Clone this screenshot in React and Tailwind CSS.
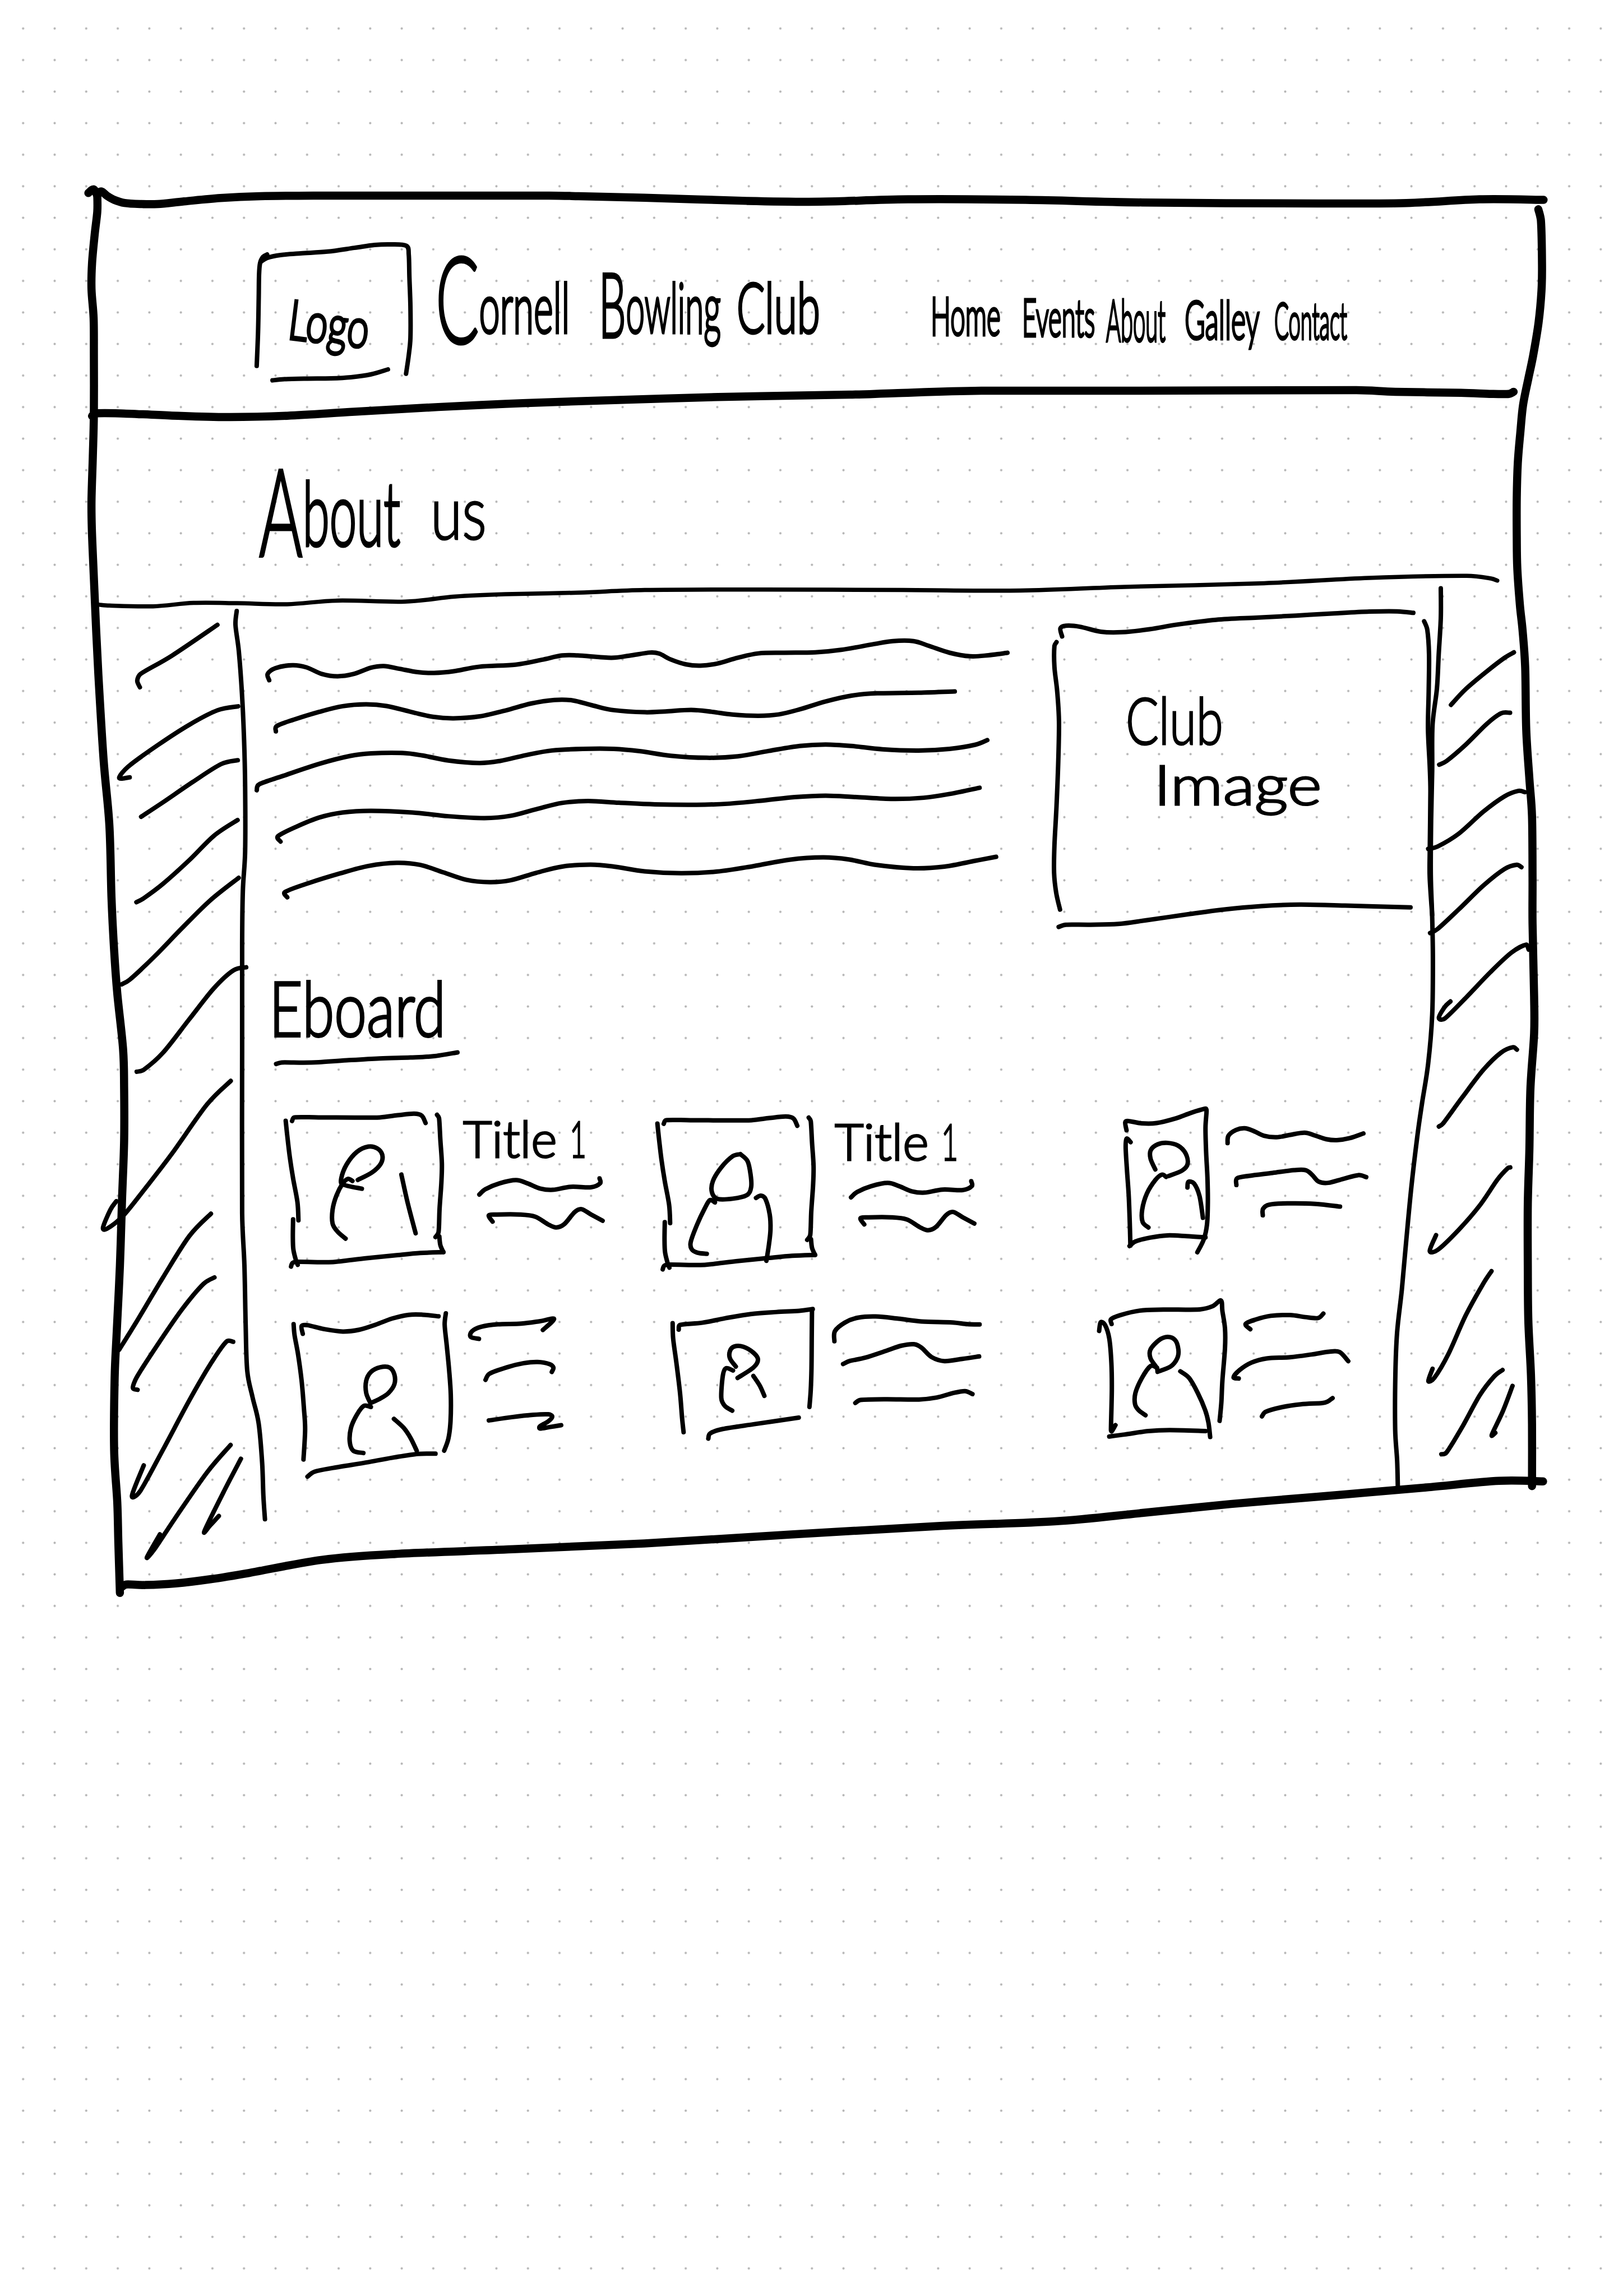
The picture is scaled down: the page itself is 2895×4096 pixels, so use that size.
import { useLayoutEffect, useRef } from "react";

// Turns a list of pen positions into one smooth stroke.
function smooth(p) {
  let d = `M${p[0][0]} ${p[0][1]}`;
  for (let i = 0; i < p.length - 1; i++) {
    const a = p[i - 1] || p[i];
    const b = p[i];
    const c = p[i + 1];
    const e = p[i + 2] || c;
    const seg = Math.hypot(c[0] - b[0], c[1] - b[1]);
    const k1 = Math.min(1 / 6, (seg * 0.4) / (Math.hypot(c[0] - a[0], c[1] - a[1]) || 1));
    const k2 = Math.min(1 / 6, (seg * 0.4) / (Math.hypot(e[0] - b[0], e[1] - b[1]) || 1));
    d += `C${b[0] + (c[0] - a[0]) * k1} ${b[1] + (c[1] - a[1]) * k1} ${c[0] - (e[0] - b[0]) * k2} ${c[1] - (e[1] - b[1]) * k2} ${c[0]} ${c[1]}`;
  }
  return d;
}

function Ink({ box, strokes, pen = 8 }) {
  return (
    <svg
      viewBox={box}
      preserveAspectRatio="none"
      className="pointer-events-none absolute inset-0 h-full w-full overflow-visible"
      fill="none"
      stroke="#000"
      strokeWidth={pen}
      strokeLinecap="round"
      strokeLinejoin="round"
      aria-hidden="true"
    >
      {strokes.map((s, i) => (
        <path key={i} d={smooth(s)} vectorEffect="non-scaling-stroke" />
      ))}
    </svg>
  );
}

// A hand-lettered word, squeezed so that it fills its own slot.
function Word({ className, children }) {
  const slot = useRef(null);
  const text = useRef(null);
  useLayoutEffect(() => {
    const ratio = slot.current.clientWidth / text.current.offsetWidth;
    text.current.style.transform = `scaleX(${ratio})`;
  }, []);
  return (
    <span ref={slot} className={`block shrink-0 ${className}`}>
      <span ref={text} className="inline-block origin-left whitespace-nowrap">
        {children}
      </span>
    </span>
  );
}

const frameThick = [
  [[168, 367], [178, 360], [185, 372]],
  [[185, 368], [193, 364], [203, 372], [217, 380], [237, 386], [267, 388], [300, 388], [350, 383], [419, 376.5], [495, 373], [610, 372], [738, 372], [929, 372], [1044, 372], [1100, 373], [1225, 376], [1420, 382], [1560, 383.5], [1727, 379], [1950, 380], [2172, 385], [2507, 387], [2674, 386], [2813, 379], [2935, 380]],
  [[185, 372], [185, 402], [180, 446], [175, 501], [174, 550], [178, 605], [178.5, 671], [178.5, 786], [176.5, 868], [174, 951], [174.6, 1005], [178, 1088], [182, 1180], [187, 1282], [197, 1445], [208, 1570], [212, 1707], [217, 1807], [223, 1889], [234, 1995], [236, 2070], [236, 2170], [232, 2282], [228, 2407], [222, 2532], [218, 2620], [217, 2757], [223, 2857], [225, 2932], [228, 3029]],
  [[175, 791], [182, 786], [228, 786], [323, 790], [432, 793], [546, 790.6], [674, 783], [833, 774], [961, 768], [1100, 763], [1365, 755], [1615, 750.5], [1700, 747.7], [1866, 743], [2115, 743], [2579, 742], [2653, 745], [2778, 747], [2836, 749], [2869, 749], [2878, 745]],
  [[2925, 398], [2930, 420], [2932, 503], [2931, 553], [2925.5, 613], [2915, 677], [2906, 720], [2896, 770], [2891, 820], [2886, 880], [2884, 947], [2884, 1020], [2885, 1080], [2890, 1151], [2895, 1198], [2900, 1269], [2902, 1387], [2908, 1481], [2913, 1552], [2914, 1670], [2914, 1756], [2917, 1896], [2917, 1965], [2910, 2070], [2908, 2186], [2905, 2290], [2905, 2406], [2906, 2511], [2911, 2615], [2913, 2708], [2913, 2826]],
  [[231, 3018], [240, 3013], [277, 3014], [334, 3011], [400, 3003], [474, 2991], [613, 2966], [752, 2955], [975, 2946], [1225, 2935], [1504, 2918], [1783, 2902], [2005, 2893], [2172, 2877], [2340, 2860], [2507, 2846], [2600, 2838], [2717, 2828], [2850, 2816], [2934, 2817]],
];

const frameThin = [
  [[189, 1150], [208, 1151.5], [291, 1153], [368, 1146.5], [451, 1147], [546, 1149], [642, 1142], [770, 1144], [865, 1134.5], [961, 1130], [1100, 1127], [1226, 1122], [1450, 1121], [1717, 1122], [1940, 1123], [2139, 1116], [2404, 1109], [2603, 1099], [2789, 1095], [2835, 1100], [2847, 1104]],
];

const logoBox = [
  [[640, 300], [628, 308], [619, 330], [616, 370], [615, 450], [613, 570], [609, 687]],
  [[622, 325], [640, 312], [680, 302], [740, 296], [820, 290], [900, 277], [960, 267], [1010, 265], [1055, 270], [1062, 300], [1064, 380], [1067, 480], [1067, 590], [1062, 650], [1054, 714]],
  [[656, 737], [690, 733], [760, 731], [830, 730], [890, 726], [950, 716], [1000, 699]],
];

const paragraph = [
  [[73, 440], [70, 410], [85, 382], [118, 368], [145, 378], [175, 410], [205, 421], [235, 411], [270, 380], [295, 372], [325, 385], [360, 401], [392, 405], [430, 397], [480, 375], [550, 365], [600, 342], [640, 321], [670, 321], [735, 332], [770, 322], [810, 307], [828, 312], [850, 340], [880, 364], [908, 370], [940, 360], [980, 332], [1020, 311], [1070, 308], [1130, 306], [1180, 294], [1240, 268], [1280, 252], [1320, 252], [1350, 275], [1390, 308], [1430, 325], [1465, 320], [1502, 308]],
  [[86, 686], [88, 660], [120, 630], [170, 592], [215, 565], [260, 556], [300, 564], [350, 594], [390, 616], [430, 623], [480, 614], [530, 586], [580, 552], [625, 535], [660, 537], [700, 562], [740, 584], [800, 594], [840, 590], [890, 583], [930, 592], [970, 605], [1020, 611], [1060, 604], [1100, 580], [1150, 542], [1200, 514], [1250, 503], [1330, 500], [1400, 494]],
  [[49, 969], [54, 940], [100, 900], [170, 842], [230, 804], [270, 792], [330, 790], [370, 802], [420, 826], [480, 838], [520, 828], [570, 800], [620, 778], [680, 770], [740, 770], [790, 781], [850, 803], [920, 813], [980, 806], [1040, 780], [1100, 756], [1150, 749], [1200, 756], [1260, 772], [1330, 778], [1390, 770], [1440, 750], [1463, 728]],
  [[95, 1216], [90, 1190], [125, 1145], [170, 1100], [215, 1076], [270, 1068], [350, 1076], [420, 1094], [490, 1103], [540, 1092], [590, 1060], [640, 1030], [690, 1021], [750, 1029], [820, 1037], [900, 1039], [960, 1034], [1030, 1018], [1090, 1002], [1150, 995], [1210, 1002], [1280, 1011], [1340, 1005], [1390, 987], [1448, 957]],
  [[108, 1484], [104, 1458], [150, 1415], [210, 1369], [265, 1333], [320, 1318], [365, 1328], [410, 1364], [455, 1400], [500, 1411], [540, 1402], [590, 1366], [640, 1336], [695, 1327], [740, 1336], [800, 1359], [870, 1368], [940, 1360], [1010, 1334], [1080, 1303], [1145, 1292], [1195, 1302], [1250, 1329], [1320, 1344], [1380, 1336], [1440, 1308], [1480, 1289]],
];

const clubImageBox = [
  [[119, 277], [114, 245], [130, 234], [170, 238], [230, 258], [290, 260], [370, 248], [450, 229], [560, 210], [680, 201], [790, 193], [900, 184], [1000, 177], [1080, 176], [1126, 182]],
  [[103, 300], [97, 315], [97, 400], [105, 500], [110, 620], [108, 780], [103, 960], [97, 1120], [96, 1230], [102, 1310], [113, 1378]],
  [[109, 1448], [130, 1439], [200, 1439], [280, 1436], [360, 1421], [480, 1397], [580, 1378], [690, 1364], [800, 1358], [930, 1362], [1118, 1369]],
  [[1157, 216], [1166, 250], [1171, 350], [1170, 500], [1168, 650], [1173, 800], [1175, 900], [1173, 1150], [1173, 1250], [1180, 1400]],
];

const leftGutter = [
  [[870, 34], [863, 55], [882, 95], [900, 160], [912, 230], [918, 300], [918, 400], [905, 460], [901, 540], [901, 700], [901, 950], [914, 1030], [921, 1120], [930, 1190], [960, 1230], [995, 1270], [1015, 1330], [1022, 1380], [1031, 1416]],
  [[318, 150], [303, 140], [320, 130], [500, 102], [760, 55]],
  [[260, 287], [200, 288], [250, 271], [420, 238], [600, 207], [760, 185], [878, 179]],
  [[325, 347], [450, 325], [620, 294], [780, 267], [876, 261]],
  [[298, 477], [340, 471], [450, 449], [600, 413], [740, 376], [875, 352]],
  [[215, 602], [260, 595], [400, 560], [560, 516], [720, 474], [881, 440]],
  [[300, 735], [340, 732], [450, 706], [600, 655], [740, 608], [850, 581], [924, 576]],
  [[184, 932], [150, 945], [108, 972], [130, 974], [220, 955], [350, 912], [500, 860], [700, 785], [836, 749]],
  [[200, 1158], [300, 1115], [450, 1048], [600, 985], [723, 951]],
  [[305, 1219], [278, 1216], [300, 1200], [420, 1150], [560, 1096], [680, 1058], [743, 1048]],
  [[340, 1334], [273, 1380], [320, 1373], [450, 1310], [600, 1235], [720, 1180], [810, 1146], [850, 1146]],
  [[432, 1439], [358, 1474], [400, 1462], [520, 1414], [700, 1345], [835, 1303]],
  [[894, 1324], [800, 1372], [686, 1434], [720, 1425], [768, 1411]],
];

const rightGutter = [
  [[417, 51], [417, 100], [405, 160], [395, 215], [370, 275], [368, 350], [362, 430], [360, 520], [368, 590], [372, 660], [368, 750], [345, 830], [310, 895], [285, 945], [250, 1030], [220, 1120], [195, 1200], [168, 1270], [158, 1340], [157, 1430], [168, 1480], [172, 1523]],
  [[475, 242], [560, 216], [680, 187], [780, 165], [834, 156]],
  [[408, 340], [450, 334], [560, 307], [680, 273], [760, 256], [812, 255]],
  [[345, 478], [400, 474], [520, 453], [660, 417], [780, 392], [860, 383], [896, 385]],
  [[356, 616], [400, 609], [520, 577], [660, 538], [780, 511], [850, 504], [877, 508]],
  [[472, 728], [440, 737], [406, 755], [440, 756], [560, 722], [700, 680], [820, 648], [905, 635], [918, 643]],
  [[406, 933], [430, 928], [540, 885], [660, 840], [760, 812], [830, 803], [851, 807]],
  [[390, 1111], [354, 1137], [400, 1135], [520, 1102], [640, 1062], [740, 1020], [800, 1001], [813, 1000]],
  [[370, 1330], [346, 1350], [380, 1345], [460, 1306], [560, 1242], [660, 1190], [706, 1170]],
  [[420, 1470], [450, 1467], [540, 1425], [640, 1373], [720, 1343], [769, 1332]],
  [[826, 1358], [770, 1400], [708, 1438], [728, 1435]],
];

const underline = [
  [[93, 549], [115, 542], [200, 543], [260, 541], [370, 532], [500, 523], [620, 519], [710, 513], [805, 495]],
];

const titledCard = [
  [[156, 813], [165, 796], [260, 796], [400, 797], [500, 796], [570, 786], [635, 779], [665, 788], [680, 822]],
  [[131, 812], [137, 880], [147, 980], [160, 1080], [177, 1190], [181, 1275]],
  [[160, 1270], [159, 1350], [161, 1410], [171, 1460], [178, 1482]],
  [[152, 1490], [158, 1473], [180, 1468], [300, 1470], [350, 1465], [450, 1451], [560, 1438], [660, 1427], [750, 1423]],
  [[725, 784], [733, 800], [738, 900], [744, 1010], [742, 1100], [735, 1220], [731, 1330], [719, 1353]],
  [[734, 1350], [738, 1390], [750, 1423]],
  [[891, 1155], [915, 1130], [970, 1103], [1035, 1088], [1080, 1103], [1130, 1127], [1180, 1133], [1250, 1119], [1330, 1121], [1365, 1103], [1363, 1080]],
  [[943, 1281], [928, 1252], [960, 1248], [1050, 1248], [1110, 1258], [1160, 1293], [1193, 1308], [1225, 1292], [1265, 1237], [1292, 1223], [1330, 1248], [1375, 1277]],
];

const personA = [
  [[414, 1087], [470, 1052], [505, 1010], [510, 970], [490, 940], [455, 932], [410, 957], [370, 1015], [349, 1080], [355, 1108], [430, 1128]],
  [[393, 1092], [375, 1082], [355, 1103], [330, 1160], [315, 1225], [315, 1290], [335, 1328], [366, 1360]],
  [[585, 1062], [610, 1195], [641, 1335]],
];

const personB = [
  [[430, 287], [400, 295], [355, 340], [322, 395], [318, 440], [340, 467], [400, 466], [455, 452], [472, 420], [470, 370], [458, 315], [430, 287]],
  [[330, 481], [310, 472], [290, 505], [260, 570], [235, 640], [238, 668], [260, 683], [298, 688]],
  [[491, 463], [510, 454], [528, 467], [545, 530], [548, 590], [542, 650], [532, 716]],
];

const cardC = [
  [[300, 190], [294, 158], [310, 153], [370, 162], [440, 161], [530, 142], [600, 120], [668, 103], [673, 112], [668, 180], [671, 280], [677, 380], [679, 480], [675, 570], [660, 630], [630, 682]],
  [[319, 238], [300, 224], [296, 260], [302, 350], [310, 450], [315, 560], [318, 655]],
  [[314, 657], [340, 639], [410, 623], [490, 614], [580, 617], [668, 622]],
  [[434, 348], [412, 305], [413, 270], [445, 247], [490, 241], [540, 252], [575, 283], [585, 325], [560, 352], [495, 375]],
  [[484, 378], [465, 369], [435, 390], [395, 445], [373, 510], [375, 560], [402, 582]],
  [[584, 421], [588, 398], [615, 405], [640, 455], [656, 543]],
  [[771, 242], [775, 212], [810, 189], [850, 182], [890, 192], [940, 212], [1000, 218], [1060, 209], [1130, 200], [1180, 212], [1230, 226], [1280, 230], [1340, 222], [1404, 203]],
  [[812, 411], [815, 384], [870, 374], [980, 362], [1080, 351], [1135, 351], [1165, 370], [1195, 397], [1240, 402], [1310, 386], [1380, 371], [1417, 379]],
  [[935, 533], [936, 507], [965, 490], [1050, 485], [1180, 487], [1295, 498]],
];

const cardD = [
  [[170, 352], [165, 308], [190, 303], [260, 325], [340, 339], [410, 329], [480, 300], [550, 265], [620, 244], [680, 243], [748, 252]],
  [[131, 297], [135, 360], [150, 470], [165, 620], [175, 780], [180, 900], [173, 1070]],
  [[779, 235], [774, 300], [783, 420], [793, 560], [800, 700], [799, 850], [790, 950], [772, 1020]],
  [[190, 1168], [220, 1140], [300, 1118], [450, 1085], [560, 1058], [660, 1038], [735, 1037]],
  [[458, 748], [440, 690], [440, 620], [460, 570], [500, 543], [540, 545], [560, 585], [560, 640], [535, 690], [500, 722], [458, 748]],
  [[460, 770], [430, 764], [400, 815], [375, 890], [370, 970], [385, 1020], [428, 1033]],
  [[558, 838], [600, 890], [630, 950], [655, 1020]],
  [[920, 381], [885, 370], [890, 338], [930, 312], [1000, 298], [1100, 294], [1180, 280], [1240, 267], [1192, 330]],
  [[948, 615], [965, 580], [1040, 543], [1110, 520], [1170, 513], [1220, 525], [1237, 545], [1230, 570]],
  [[962, 847], [1060, 828], [1150, 815], [1215, 812], [1232, 825], [1215, 852], [1180, 880], [1180, 893], [1220, 885], [1270, 874]],
];

const cardE = [
  [[163, 968], [165, 1030], [178, 1130], [192, 1250], [200, 1350], [206, 1408]],
  [[187, 994], [192, 975], [280, 966], [370, 948], [470, 931], [570, 923], [660, 918], [713, 911]],
  [[710, 915], [709, 1030], [708, 1150], [705, 1240], [700, 1306]],
  [[303, 1434], [310, 1413], [360, 1395], [480, 1376], [580, 1361], [658, 1349]],
  [[411, 1143], [388, 1110], [388, 1080], [405, 1062], [440, 1063], [480, 1087], [498, 1115], [480, 1147], [418, 1189]],
  [[400, 1159], [372, 1150], [360, 1180], [354, 1270], [368, 1302], [397, 1321]],
  [[480, 1181], [505, 1220], [523, 1261]],
  [[798, 1041], [800, 1000], [840, 965], [890, 946], [960, 941], [1050, 950], [1140, 961], [1260, 965], [1320, 972], [1368, 973]],
  [[832, 1133], [860, 1120], [920, 1107], [1000, 1080], [1060, 1059], [1110, 1053], [1140, 1067], [1180, 1105], [1230, 1121], [1300, 1112], [1366, 1102]],
  [[880, 1290], [900, 1278], [1000, 1275], [1130, 1276], [1200, 1268], [1260, 1251], [1310, 1242], [1340, 1254]],
];

const cardF = [
  [[171, 1000], [178, 965], [198, 975], [218, 1030], [228, 1130], [230, 1240], [226, 1400], [230, 1405], [247, 1380]],
  [[229, 972], [226, 953], [270, 936], [360, 918], [470, 914], [640, 913], [700, 900], [738, 877], [745, 920], [757, 990], [757, 1070], [745, 1200], [740, 1290], [732, 1363]],
  [[218, 1426], [290, 1418], [400, 1404], [500, 1400], [667, 1404]],
  [[443, 1165], [440, 1150], [410, 1110], [410, 1075], [450, 1037], [490, 1024], [525, 1037], [540, 1075], [535, 1110], [505, 1143], [443, 1165]],
  [[440, 1148], [410, 1142], [370, 1190], [340, 1250], [338, 1295], [355, 1320], [387, 1340]],
  [[549, 1163], [590, 1190], [630, 1250], [665, 1320], [680, 1370], [688, 1428]],
  [[875, 993], [853, 972], [900, 954], [970, 939], [1060, 936], [1130, 944], [1190, 948], [1215, 930]],
  [[821, 1192], [797, 1187], [825, 1158], [880, 1128], [950, 1111], [1060, 1106], [1160, 1095], [1240, 1084], [1290, 1085], [1331, 1122]],
  [[929, 1345], [945, 1327], [1020, 1308], [1110, 1296], [1210, 1291], [1235, 1285], [1258, 1271]],
];

function TitledCard({ className, person, personBox }) {
  return (
    <article className={`relative flex h-[310px] w-[600px] shrink-0 items-start pt-[15px] pl-[329px] ${className}`}>
      <Ink box="103.2 735 1320.4 808.5" strokes={titledCard} />
      <Ink box={personBox} strokes={person} />
      <h3 className="flex gap-[22px] text-[90px] [-webkit-text-stroke:3px_black]">
        <Word className="w-[168px]">Title</Word>
        <Word className="w-[30px]">1</Word>
      </h3>
    </article>
  );
}

function Header() {
  return (
    <header className="flex h-[375px] items-start pt-[75px] pl-[450px]">
      <div className="relative h-[253px] w-[291px] shrink-0 pt-[100px] pl-[65px]">
        <Ink box="595.8 255.3 486.1 492.3" strokes={logoBox} />
        <div className="rotate-[7deg] text-[98px]">
          <Word className="w-[144px]">Logo</Word>
        </div>
      </div>
      <h1 className="mt-[53px] ml-[36px] flex text-[125px]">
        <Word className="w-[239px]">
          <span className="relative top-[18px] text-[215px] leading-[0]">C</span>ornell
        </Word>
        <Word className="ml-[52px] w-[218px]">
          <span className="relative top-[8px] text-[160px] leading-[0]">B</span>owling
        </Word>
        <Word className="ml-[28px] w-[149px]">Club</Word>
      </h1>
      <nav className="ml-[197px] flex items-start">
        <Word className="mt-[84px] w-[125px] text-[94px]">Home</Word>
        <Word className="mt-[88px] ml-[38px] w-[130px] text-[92px]">Events</Word>
        <Word className="mt-[88px] ml-[20px] w-[106px] text-[102px]">About</Word>
        <Word className="mt-[90px] ml-[34px] w-[134px] text-[95px]">Galley</Word>
        <Word className="mt-[94px] ml-[26px] w-[130px] text-[90px]">Contact</Word>
      </nav>
    </header>
  );
}

export default function App() {
  return (
    <div className="relative h-[4096px] w-[2895px] overflow-hidden bg-white bg-[radial-gradient(circle,#b3b3b3_1.6px,transparent_2.4px)] bg-size-[56.287px_56.287px] bg-position-[13.1px_22.7px] pt-[356px] font-['Lato','Open_Sans',sans-serif] leading-none font-light text-black [-webkit-text-stroke:5px_black]">
      <Ink box="0 0 3086 4366" strokes={frameThick} pen={14.5} />
      <Ink box="0 0 3086 4366" strokes={frameThin} pen={7.5} />

      <Header />

      <section className="flex h-[338px] items-start pl-[462px]">
        <h2 className="flex pt-[101px] text-[160px]">
          <Word className="w-[252px]">
            <span className="relative top-[19px] text-[218px] leading-[0]">A</span>bout
          </Word>
          <Word className="mt-[13px] ml-[54px] w-[100px] text-[132px] [-webkit-text-stroke:3px_black]">us</Word>
        </h2>
      </section>

      <div className="flex pl-[150px]">
        <aside className="relative h-[1782px] w-[291px] shrink-0">
          <Ink box="0 16 930 1520" strokes={leftGutter} />
        </aside>

        <main className="w-[2083px] shrink-0">
          <section className="flex h-[666px] items-start gap-[19px]">
            <div className="relative h-[563px] w-[1398px] shrink-0">
              <Ink box="30.5 50.6 1517 1517.4" strokes={paragraph} />
            </div>
            <figure className="relative h-[619px] w-[666px] shrink-0 pt-[157px] pl-[150px] [-webkit-text-stroke:3px_black]">
              <Ink box="60.3 127.1 1070.5 1398.5" strokes={clubImageBox} />
              <Word className="w-[174px] text-[116px]">Club</Word>
              <Word className="mt-[7px] ml-[50px] w-[300px] text-[98px]">Image</Word>
            </figure>
          </section>

          <section className="h-[216px] pl-[28px]">
            <h2 className="relative h-[178px] w-[375px] pl-[11px] text-[136px] [-webkit-text-stroke:4px_black]">
              <Ink box="41.3 122.5 825.3 465.5" strokes={underline} />
              <Word className="-translate-y-[6px] w-[315px]">Eboard</Word>
            </h2>
          </section>

          <section className="flex h-[356px] items-start pl-[56px]">
            <TitledCard className="mt-[19px]" person={personA} personBox="103.2 735 1320.4 808.5" />
            <TitledCard className="mt-[24px] ml-[63px]" person={personB} personBox="76.3 97.5 1320.4 699.2" />
            <article className="relative ml-[219px] h-[300px] w-[497px] shrink-0">
              <Ink box="220.5 42.4 1298.5 678" strokes={cardC} />
            </article>
          </section>

          <section className="flex items-start pl-[56px]">
            <article className="relative h-[356px] w-[535px] shrink-0">
              <Ink box="67.2 120 1276.8 1140" strokes={cardD} />
            </article>
            <article className="relative mt-[19px] ml-[150px] h-[281px] w-[600px] shrink-0">
              <Ink box="123.8 889.9 1320.4 635.7" strokes={cardE} />
            </article>
            <article className="relative ml-[160px] h-[281px] w-[488px] shrink-0">
              <Ink box="122.5 847.6 1274 635.7" strokes={cardF} />
            </article>
          </section>
        </main>

        <aside className="relative h-[1782px] w-[244px] shrink-0">
          <Ink box="270 68.9 780 1636.9" strokes={rightGutter} />
        </aside>
      </div>
    </div>
  );
}
